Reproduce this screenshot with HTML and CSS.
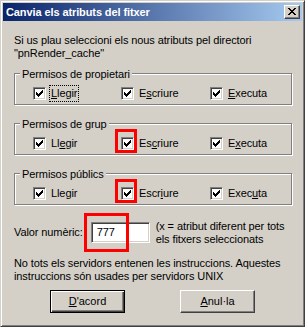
FILE: index.html
```html
<!doctype html>
<html>
    <head>
        <title>Canvia els atributs del fitxer</title>
        <link rel="stylesheet" href="styles.css">
    </head>
    <body>
        <div class="window">
            <div class="titlebar">
                <span class="title">Canvia els atributs del fitxer</span>
                <span class="close" title="Tanca">
                    <svg width="8" height="7" viewBox="0 0 8 7"><path d="M0 0h2v1h-2z M6 0h2v1h-2z M1 1h2v1h-2z M5 1h2v1h-2z M2 2h4v1h-4z M3 3h2v1h-2z M2 4h4v1h-4z M1 5h2v1h-2z M5 5h2v1h-2z M0 6h2v1h-2z M6 6h2v1h-2z"/></svg>
                </span>
            </div>
            <div class="content">
                <p class="intro">Si us plau seleccioni els nous atributs pel directori<br>"pnRender_cache"</p>

                <div class="group">
                    <span class="legend">Permisos de propietari</span>
                    <div class="checks">
                        <label class="check"><span class="box"><svg viewBox="0 0 7 7"><path d="M0 2V5H1V6H2V7H3V6H4V5H5V4H6V3H7V0H6V1H5V2H4V3H3V4H2V3H1V2Z"/></svg></span><span class="text focus"><u>L</u>legir</span></label>
                        <label class="check"><span class="box"><svg viewBox="0 0 7 7"><path d="M0 2V5H1V6H2V7H3V6H4V5H5V4H6V3H7V0H6V1H5V2H4V3H3V4H2V3H1V2Z"/></svg></span><span class="text">E<u>s</u>criure</span></label>
                        <label class="check"><span class="box"><svg viewBox="0 0 7 7"><path d="M0 2V5H1V6H2V7H3V6H4V5H5V4H6V3H7V0H6V1H5V2H4V3H3V4H2V3H1V2Z"/></svg></span><span class="text"><u>E</u>xecuta</span></label>
                    </div>
                </div>

                <div class="group">
                    <span class="legend">Permisos de grup</span>
                    <div class="checks">
                        <label class="check"><span class="box"><svg viewBox="0 0 7 7"><path d="M0 2V5H1V6H2V7H3V6H4V5H5V4H6V3H7V0H6V1H5V2H4V3H3V4H2V3H1V2Z"/></svg></span><span class="text">Ll<u>e</u>gir</span></label>
                        <label class="check"><span class="box marked"><svg viewBox="0 0 7 7"><path d="M0 2V5H1V6H2V7H3V6H4V5H5V4H6V3H7V0H6V1H5V2H4V3H3V4H2V3H1V2Z"/></svg></span><span class="text">Es<u>c</u>riure</span></label>
                        <label class="check"><span class="box"><svg viewBox="0 0 7 7"><path d="M0 2V5H1V6H2V7H3V6H4V5H5V4H6V3H7V0H6V1H5V2H4V3H3V4H2V3H1V2Z"/></svg></span><span class="text">E<u>x</u>ecuta</span></label>
                    </div>
                </div>

                <div class="group">
                    <span class="legend">Permisos públics</span>
                    <div class="checks">
                        <label class="check"><span class="box"><svg viewBox="0 0 7 7"><path d="M0 2V5H1V6H2V7H3V6H4V5H5V4H6V3H7V0H6V1H5V2H4V3H3V4H2V3H1V2Z"/></svg></span><span class="text">Lle<u>g</u>ir</span></label>
                        <label class="check"><span class="box marked"><svg viewBox="0 0 7 7"><path d="M0 2V5H1V6H2V7H3V6H4V5H5V4H6V3H7V0H6V1H5V2H4V3H3V4H2V3H1V2Z"/></svg></span><span class="text">Escr<u>i</u>ure</span></label>
                        <label class="check"><span class="box"><svg viewBox="0 0 7 7"><path d="M0 2V5H1V6H2V7H3V6H4V5H5V4H6V3H7V0H6V1H5V2H4V3H3V4H2V3H1V2Z"/></svg></span><span class="text">Exec<u>u</u>ta</span></label>
                    </div>
                </div>

                <div class="valueRow">
                    <span class="label">Valor numèric:</span>
                    <span class="edit marked">777</span>
                    <span class="hint">(x = atribut diferent per tots<br>els fitxers seleccionats</span>
                </div>

                <p class="note">No tots els servidors entenen les instruccions. Aquestes<br>instruccions són usades per servidors UNIX</p>

                <div class="buttonsBlock">
                    <button type="button" class="btn btn_default"><u>D</u>'acord</button>
                    <button type="button" class="btn"><u>A</u>nul·la</button>
                </div>
            </div>
        </div>
    </body>
</html>
```

FILE: styles.css
```css
html, body {
  margin: 0;
  overflow: hidden;
}

body {
  font: 11px/13px "Liberation Sans", Arial, sans-serif;
  letter-spacing: -0.1px;
  color: #000;
  background: #d4d0c8;
}

.window {
  box-sizing: border-box;
  width: 305px;
  height: 327px;
  padding: 2px;
  background: #d4d0c8;
  border: 1px solid;
  border-color: #d4d0c8 #404040 #404040 #d4d0c8;
  box-shadow: inset 1px 1px 0 #fff, inset -1px -1px 0 #808080;
}

/* Title bar */
.titlebar {
  display: flex;
  align-items: center;
  justify-content: space-between;
  height: 18px;
  padding: 0 2px 0 3px;
  background: linear-gradient(to right, #0a246a, #a6caf0);
}

.titlebar .title {
  color: #fff;
  font-weight: bold;
}

.titlebar .close {
  box-sizing: border-box;
  display: flex;
  align-items: center;
  justify-content: center;
  width: 16px;
  height: 14px;
  background: #d4d0c8;
  border: 1px solid;
  border-color: #fff #404040 #404040 #fff;
  box-shadow: inset -1px -1px 0 #808080;
}

.titlebar .close svg {
  display: block;
  margin: 0 1px 1px 0;
}

.content {
  padding: 0 10px 0 11px;
}

.intro {
  margin: 13px 0 0;
}

/* Group boxes */
.group {
  position: relative;
  box-sizing: border-box;
  height: 32px;
  margin-top: 18px;
  padding: 10px 0 0 18px;
  border: 1px solid #808080;
  box-shadow: 1px 1px 0 #fff, inset 1px 1px 0 #fff;
}

.intro + .group {
  margin-top: 13px;
}

.group .legend {
  position: absolute;
  top: -6px;
  left: 5px;
  padding: 0 2px;
  background: #d4d0c8;
}

.checks {
  display: grid;
  grid-template-columns: 88px 89px auto;
}

.check {
  display: flex;
  align-items: center;
  height: 18px;
}

.check .box {
  position: relative;
  box-sizing: border-box;
  width: 13px;
  height: 13px;
  padding: 1px;
  background: #fff;
  border: 1px solid;
  border-color: #808080 #fff #fff #808080;
  box-shadow: inset 1px 1px 0 #404040, inset -1px -1px 0 #d4d0c8;
}

.check .box svg {
  display: block;
  width: 7px;
  height: 7px;
  margin: 1px 0 0 1px;
}

.check .text {
  margin-left: 3px;
  padding: 1px 1px;
  border: 1px solid transparent;
}

.check .focus {
  border: 1px dotted #000;
}

/* Red highlights drawn over the form */
.marked::after {
  content: "";
  position: absolute;
  border: 3px solid #f00;
}

.check .box.marked::after {
  top: -9px;
  left: -7px;
  width: 16px;
  height: 18px;
}

.valueRow {
  display: flex;
  align-items: flex-start;
  margin-top: 15px;
}

.valueRow .label {
  margin-top: 6px;
}

.edit {
  position: relative;
  box-sizing: border-box;
  width: 59px;
  height: 21px;
  margin: 2px 0 0 8px;
  padding: 3px 5px;
  background: #fff;
  border: 1px solid;
  border-color: #808080 #fff #fff #808080;
  box-shadow: inset 1px 1px 0 #404040, inset -1px -1px 0 #d4d0c8;
}

.edit.marked::after {
  top: -10px;
  left: -8px;
  width: 39px;
  height: 33px;
}

.hint {
  margin-left: 6px;
}

.note {
  margin: 11px 0 0;
}

.buttonsBlock {
  display: flex;
  gap: 55px;
  margin: 7px 0 0 36px;
}

.btn {
  box-sizing: border-box;
  width: 75px;
  height: 23px;
  padding: 0;
  font: inherit;
  color: #000;
  background: #d4d0c8;
  border: 1px solid;
  border-color: #fff #404040 #404040 #fff;
  box-shadow: inset -1px -1px 0 #808080;
}

.btn_default {
  border: 1px solid #000;
  box-shadow: inset 1px 1px 0 #fff, inset -1px -1px 0 #404040, inset -2px -2px 0 #808080;
}
```
